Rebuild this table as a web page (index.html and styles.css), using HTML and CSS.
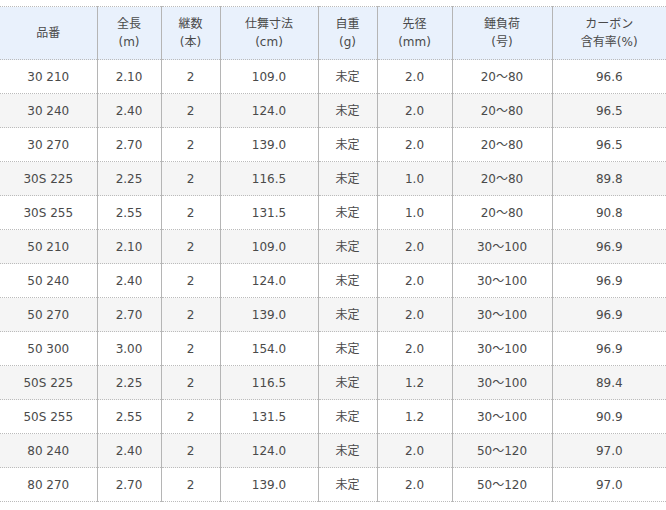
FILE: index.html
```html
<!DOCTYPE html>
<html lang="ja">
<head>
<meta charset="utf-8">
<link rel="stylesheet" href="styles.css">
</head>
<body>
<table class="spec">
  <colgroup>
    <col class="c1"><col class="c2"><col class="c3"><col class="c4"><col class="c5"><col class="c6"><col class="c7"><col class="c8">
  </colgroup>
  <thead>
    <tr>
      <th>品番</th>
      <th>全長<br>(m)</th>
      <th>継数<br>(本)</th>
      <th>仕舞寸法<br>(cm)</th>
      <th>自重<br>(g)</th>
      <th>先径<br>(mm)</th>
      <th>錘負荷<br>(号)</th>
      <th>カーボン<br>含有率(%)</th>
    </tr>
  </thead>
  <tbody>
    <tr><td>30 210</td><td>2.10</td><td>2</td><td>109.0</td><td>未定</td><td>2.0</td><td>20～80</td><td>96.6</td></tr>
    <tr><td>30 240</td><td>2.40</td><td>2</td><td>124.0</td><td>未定</td><td>2.0</td><td>20～80</td><td>96.5</td></tr>
    <tr><td>30 270</td><td>2.70</td><td>2</td><td>139.0</td><td>未定</td><td>2.0</td><td>20～80</td><td>96.5</td></tr>
    <tr><td>30S 225</td><td>2.25</td><td>2</td><td>116.5</td><td>未定</td><td>1.0</td><td>20～80</td><td>89.8</td></tr>
    <tr><td>30S 255</td><td>2.55</td><td>2</td><td>131.5</td><td>未定</td><td>1.0</td><td>20～80</td><td>90.8</td></tr>
    <tr><td>50 210</td><td>2.10</td><td>2</td><td>109.0</td><td>未定</td><td>2.0</td><td>30～100</td><td>96.9</td></tr>
    <tr><td>50 240</td><td>2.40</td><td>2</td><td>124.0</td><td>未定</td><td>2.0</td><td>30～100</td><td>96.9</td></tr>
    <tr><td>50 270</td><td>2.70</td><td>2</td><td>139.0</td><td>未定</td><td>2.0</td><td>30～100</td><td>96.9</td></tr>
    <tr><td>50 300</td><td>3.00</td><td>2</td><td>154.0</td><td>未定</td><td>2.0</td><td>30～100</td><td>96.9</td></tr>
    <tr><td>50S 225</td><td>2.25</td><td>2</td><td>116.5</td><td>未定</td><td>1.2</td><td>30～100</td><td>89.4</td></tr>
    <tr><td>50S 255</td><td>2.55</td><td>2</td><td>131.5</td><td>未定</td><td>1.2</td><td>30～100</td><td>90.9</td></tr>
    <tr><td>80 240</td><td>2.40</td><td>2</td><td>124.0</td><td>未定</td><td>2.0</td><td>50～120</td><td>97.0</td></tr>
    <tr><td>80 270</td><td>2.70</td><td>2</td><td>139.0</td><td>未定</td><td>2.0</td><td>50～120</td><td>97.0</td></tr>
  </tbody>
</table>
</body>
</html>
```
FILE: styles.css
```css
html, body {
  margin: 0;
  padding: 0;
  background: #fff;
}
body {
  padding-top: 6px;
  font-family: "DejaVu Sans", "Noto Sans CJK JP", sans-serif;
  font-size: 12px;
  color: #4a4a4a;
}
.spec {
  border-collapse: collapse;
  table-layout: fixed;
  width: 666px;
  border-top: 1px dotted #bbb;
}
.c1 { width: 97px; }
.c2 { width: 64px; }
.c3 { width: 59px; }
.c4 { width: 98px; }
.c5 { width: 59px; }
.c6 { width: 75px; }
.c7 { width: 100px; }
.c8 { width: 114px; }
.spec th,
.spec td {
  text-align: center;
  vertical-align: middle;
  padding: 0;
  border-left: 1px solid #b5b5b5;
  border-bottom: 1px dotted #bbb;
  line-height: 18px;
}
.spec th:first-child,
.spec td:first-child {
  border-left: none;
}
.spec th {
  background: #e9f1fc;
  font-weight: normal;
  height: 52px;
}
.spec td {
  height: 33px;
}
.spec tbody tr:nth-child(even) td {
  background: #f5f5f5;
}
```
